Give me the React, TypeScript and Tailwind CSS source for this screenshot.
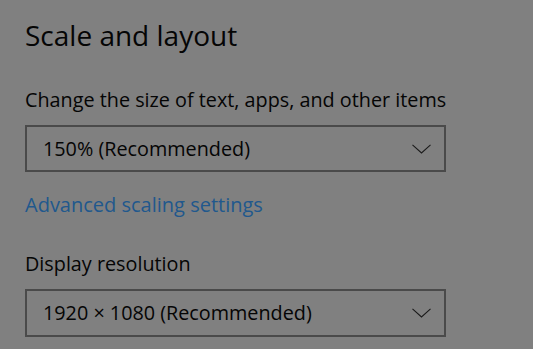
export default function App() {
  return (
    <div
      className="h-[349px] w-[533px] overflow-hidden bg-[#808080] pl-[25px] pt-[17px] text-[#050505]"
      style={{ fontFamily: '"Open Sans", "Noto Sans", sans-serif' }}
    >
      <h1 className="text-[28px] leading-[36px]">Scale and layout</h1>

      <p className="mt-[35px] text-[19.8px] leading-[24px]">Change the size of text, apps, and other items</p>
      <button className="mt-[13px] flex h-[47px] w-[421px] items-center justify-between border-2 border-[#4a4a4a] pl-[16px] pr-[13px] text-[19.8px]">
        <span>150% (Recommended)</span>
        <svg width="19" height="10" viewBox="0 0 19 10" fill="none" stroke="#1a1a1a" strokeWidth="1.1">
          <path d="M0.5 0.8 L9.5 9 L18.5 0.8" />
        </svg>
      </button>

      <p className="mt-[20px] text-[20px] leading-[26px] text-[#21588d]">Advanced scaling settings</p>

      <p className="mt-[34px] text-[19.8px] leading-[24px]">Display resolution</p>
      <button className="mt-[13px] flex h-[48px] w-[421px] items-center justify-between border-2 border-[#4a4a4a] pl-[16px] pr-[13px] text-[19.8px]">
        <span>1920 × 1080 (Recommended)</span>
        <svg width="19" height="10" viewBox="0 0 19 10" fill="none" stroke="#1a1a1a" strokeWidth="1.1">
          <path d="M0.5 0.8 L9.5 9 L18.5 0.8" />
        </svg>
      </button>
    </div>
  );
}
